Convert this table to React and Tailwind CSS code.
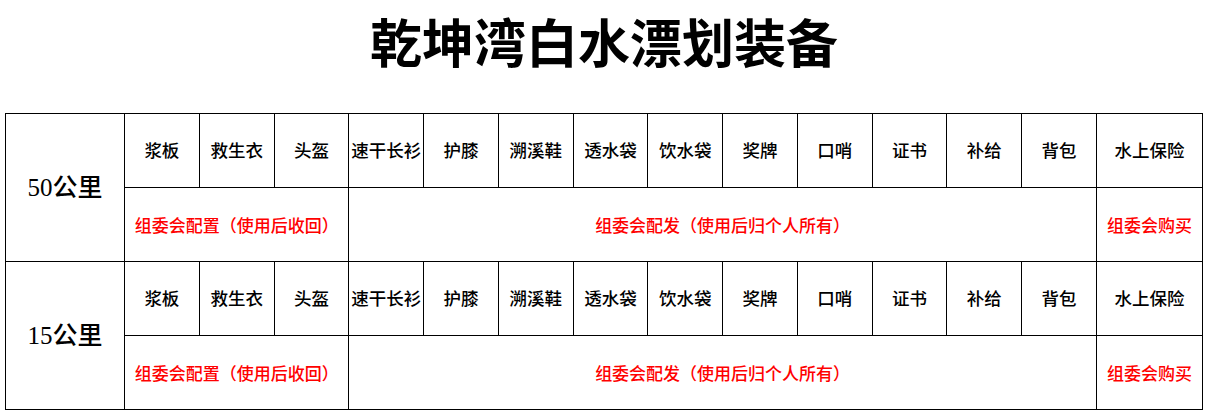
const items = ["浆板", "救生衣", "头盔", "速干长衫", "护膝", "溯溪鞋", "透水袋", "饮水袋", "奖牌", "口哨", "证书", "补给", "背包"]

const Block = ({ label }) => (
  <>
    <tr className="h-[74px]">
      <td rowSpan={2} className="border border-black text-center text-[25px] font-['Liberation_Serif','Noto_Sans_CJK_SC',serif] font-medium">
        {label}
      </td>
      {items.map((it) => (
        <td key={it} className="border border-black text-center text-[17.5px] font-medium whitespace-nowrap">
          {it}
        </td>
      ))}
      <td className="border border-black text-center text-[17.5px] font-medium whitespace-nowrap">水上保险</td>
    </tr>
    <tr className="h-[74px] text-[#ff0000] text-[17px] font-medium">
      <td colSpan={3} className="border border-black text-center whitespace-nowrap">组委会配置（使用后收回）</td>
      <td colSpan={10} className="border border-black text-center whitespace-nowrap">组委会配发（使用后归个人所有）</td>
      <td className="border border-black text-center whitespace-nowrap">组委会购买</td>
    </tr>
  </>
)

export default function App() {
  return (
    <div lang="zh-CN" className="w-[1208px] h-[415px] bg-white text-black font-['Noto_Sans_CJK_SC',sans-serif] overflow-hidden">
      <div className="h-[82px] flex items-center justify-center text-[52px] font-bold leading-none">
        乾坤湾白水漂划装备
      </div>
      <div className="pl-[5px] pt-[31px]">
        <table className="table-fixed border-collapse w-[1197px]">
          <colgroup>
            <col className="w-[119px]" />
            {items.map((it) => (
              <col key={it} className="w-[74.77px]" />
            ))}
            <col className="w-[106px]" />
          </colgroup>
          <tbody>
            <Block label="50公里" />
            <Block label="15公里" />
          </tbody>
        </table>
      </div>
    </div>
  )
}
